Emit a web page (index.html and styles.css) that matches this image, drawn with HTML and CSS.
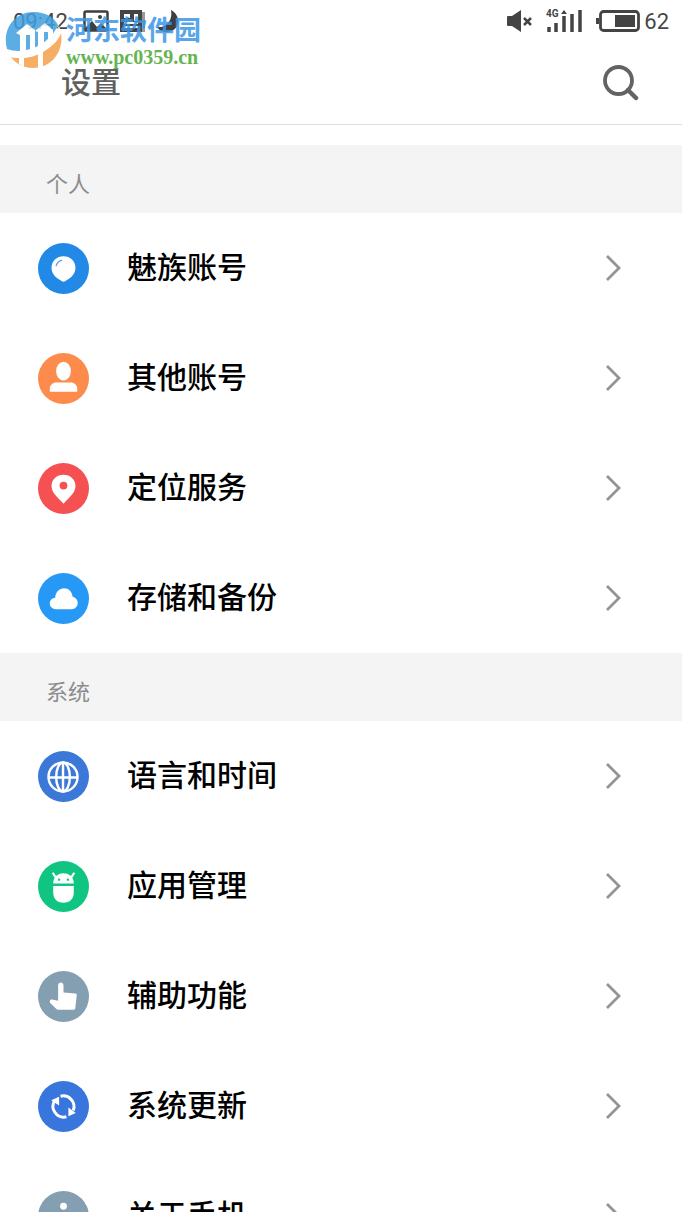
FILE: index.html
```html
<!DOCTYPE html>
<html lang="zh-CN">
<head>
  <meta charset="UTF-8">
  <meta name="viewport" content="width=device-width, initial-scale=1">
  <title>设置</title>
  <link rel="stylesheet" href="styles.css">
</head>
<body>

  <svg class="sprite" aria-hidden="true">
    <symbol id="seta" viewBox="0 0 18 28">
      <path d="M2 2l12 12L2 26" fill="none" stroke="#949494" stroke-width="2.8"/>
    </symbol>
  </svg>

  <div class="watermark">
    <svg class="watermark-logo" viewBox="0 0 58 58" aria-hidden="true">
      <path d="M3 38C-2 20 9 1 30 1c11 0 20 5 24 13C48 28 34 39 17 41 11 42 6 41 3 38z" fill="#3f9fdf"/>
      <path d="M57 22c3 18-9 35-28 35-9 0-17-4-22-11 12 3 25 0 35-7 8-5 13-11 15-17z" fill="#f5a04a"/>
      <path d="M12 22l11-9 8 6v20l-5 2V24h-4v17l-6 1V24zM31 20l10-8 8 7v11l-5 3V21h-4v17l-6 4V21z" fill="#fff"/>
      <path d="M15 45h5v11l-5-3zM34 40h5v18h-5z" fill="#fff"/>
      <path d="M3 38C20 44 42 36 55 15q2 4 2 7C47 42 24 50 7 46z" fill="#fff"/>
    </svg>
    <div class="watermark-text">
      <span class="watermark-name">河东软件园</span>
      <span class="watermark-url">www.pc0359.cn</span>
    </div>
  </div>

  <div class="phone">
    <div class="status-bar">
      <div class="status-left">
        <span class="status-time">09:42</span>
        <svg width="26" height="22" viewBox="0 0 26 22" aria-hidden="true">
          <rect x="1.5" y="1.5" width="23" height="19" rx="1.5" fill="none" stroke="#3e3e3e" stroke-width="2.5"/>
          <circle cx="17" cy="7" r="2" fill="#3e3e3e"/>
          <path d="M2 18l7-7 5 6 4-4 6 6v2H2z" fill="#3e3e3e"/>
        </svg>
        <svg width="26" height="22" viewBox="0 0 26 22" aria-hidden="true">
          <path d="M22 2h3v20h-3z" fill="#999"/>
          <path d="M0 0h22v22H0z" fill="#444"/>
          <path d="M4 4h6v4H4zM14 4h4v7h-4zM4 12h14v2H4zM4 16h14v2H4z" fill="#fff"/>
        </svg>
        <svg width="22" height="22" viewBox="0 0 22 22" aria-hidden="true">
          <path d="M14 0c11 6 9 21-4 22C5 22 2 20 0 17c9 1 16-6 14-17z" fill="#3e3e3e"/>
        </svg>
      </div>
      <div class="status-right">
        <svg width="26" height="24" viewBox="0 0 26 24" aria-hidden="true">
          <path d="M1 8q0-1 1-1h4l9-6v22l-9-6H2q-1 0-1-1z" fill="#444"/>
          <path d="M18 9l7 7M25 9l-7 7" stroke="#444" stroke-width="2.5"/>
        </svg>
        <svg class="signal" width="36" height="24" viewBox="0 0 36 24" aria-hidden="true">
          <path d="M3 18v5M10 14v9M18 7v16M26 5v18M34 1v22" stroke="#444" stroke-width="3.5"/>
          <path d="M15 5l3-4 3 4z" fill="#444"/>
          <text class="signal-text" x="0" y="8">4G</text>
        </svg>
        <svg class="battery" width="44" height="22" viewBox="0 0 44 22" aria-hidden="true">
          <rect x="4.5" y="1.5" width="38" height="19" rx="3" fill="none" stroke="#444" stroke-width="2.8"/>
          <path d="M0 8h3v6H0zM19 5h20v12H19z" fill="#444"/>
        </svg>
        <span>62</span>
      </div>
    </div>

    <header class="title-bar">
      <h1>设置</h1>
      <button class="btn-search" type="button" aria-label="搜索">
        <svg width="36" height="36" viewBox="0 0 36 36" aria-hidden="true">
          <circle cx="15.500" cy="15.500" r="13.500" fill="none" stroke="#636363" stroke-width="3.800"/>
          <path d="M25 25l8 8" stroke="#636363" stroke-width="4.500" stroke-linecap="round"/>
        </svg>
      </button>
    </header>

    <main class="settings">
      <section>
        <h2>个人</h2>
        <a class="item" href="#">
          <svg class="item-icon" viewBox="0 0 52 52" aria-hidden="true">
            <circle cx="26" cy="26" r="26" fill="#228ae6"/>
            <path d="M26 13.500c7 0 12.200 5 12.200 11.700 0 6-4 9.800-8.200 12.300-2 1.200-3 2-4 2s-2-.8-4-2c-4.200-2.500-8.200-6.300-8.200-12.300 0-6.700 5.200-11.700 12.200-11.700z" fill="#fff"/>
            <path d="M18.500 23.500q1-4.500 6-6" fill="none" stroke="#5aa5ea" stroke-width="1.500"/>
          </svg>
          <span class="item-label">魅族账号</span>
          <svg class="item-arrow" aria-hidden="true"><use href="#seta"/></svg>
        </a>
        <a class="item" href="#">
          <svg class="item-icon" viewBox="0 0 52 52" aria-hidden="true">
            <circle cx="26" cy="26" r="26" fill="#fc8b4c"/>
            <ellipse cx="26" cy="18.500" rx="7.500" ry="9.500" fill="#fff"/>
            <path d="M12 39.500v-3c0-4 3-6.500 7-6.500h14c4 0 7 2.500 7 6.500v3z" fill="#fff"/>
          </svg>
          <span class="item-label">其他账号</span>
          <svg class="item-arrow" aria-hidden="true"><use href="#seta"/></svg>
        </a>
        <a class="item" href="#">
          <svg class="item-icon" viewBox="0 0 52 52" aria-hidden="true">
            <circle cx="26" cy="26" r="26" fill="#f55153"/>
            <path d="M26 41.500C19 34 13.800 30 13.800 23.500c0-6.600 5.400-11.500 12.200-11.500s12.200 4.900 12.200 11.500C38.200 30 33 34 26 41.500z" fill="#fff"/>
            <circle cx="26" cy="23" r="4" fill="#f55153"/>
          </svg>
          <span class="item-label">定位服务</span>
          <svg class="item-arrow" aria-hidden="true"><use href="#seta"/></svg>
        </a>
        <a class="item" href="#">
          <svg class="item-icon" viewBox="0 0 52 52" aria-hidden="true">
            <circle cx="26" cy="26" r="26" fill="#2699f6"/>
            <path d="M18 37a6 6 0 0 1-6-6c0-3.500 2.500-5.500 5.500-5.800C18 19 22 15.500 26.500 15.500c4.600 0 8.300 3.500 8.800 8.800 3 .7 5.200 3.200 5.200 6.400 0 3.500-2.700 6.300-6.200 6.300z" fill="#fff"/>
          </svg>
          <span class="item-label">存储和备份</span>
          <svg class="item-arrow" aria-hidden="true"><use href="#seta"/></svg>
        </a>
      </section>

      <section>
        <h2>系统</h2>
        <a class="item" href="#">
          <svg class="item-icon" viewBox="0 0 52 52" aria-hidden="true">
            <circle cx="26" cy="26" r="26" fill="#3b78d8"/>
            <g fill="none" stroke="#fff" stroke-width="2.500">
              <circle cx="25.500" cy="26.500" r="14.800"/>
              <ellipse cx="25.500" cy="26.500" rx="7" ry="14.800"/>
              <path d="M11 27h29M25.500 12v29"/>
            </g>
          </svg>
          <span class="item-label">语言和时间</span>
          <svg class="item-arrow" aria-hidden="true"><use href="#seta"/></svg>
        </a>
        <a class="item" href="#">
          <svg class="item-icon" viewBox="0 0 52 52" aria-hidden="true">
            <circle cx="26" cy="26" r="26" fill="#0fc581"/>
            <path d="M15.500 23c0-4 1.500-6.500 3.500-8.300q3-2.200 7-2.200t7 2.200c2 1.800 3.500 4.300 3.500 8.300zM15.500 25.500h21v6.500c0 6.500-4 10.500-10.500 10.500s-10.500-4-10.500-10.500z" fill="#fff"/>
            <path d="M15 12l3.500 5.500M37 12l-3.500 5.500" stroke="#fff" stroke-width="2.200"/>
            <circle cx="21.500" cy="19" r="1.200" fill="#0fc581"/>
            <circle cx="30.500" cy="19" r="1.200" fill="#0fc581"/>
          </svg>
          <span class="item-label">应用管理</span>
          <svg class="item-arrow" aria-hidden="true"><use href="#seta"/></svg>
        </a>
        <a class="item" href="#">
          <svg class="item-icon" viewBox="0 0 52 52" aria-hidden="true">
            <circle cx="26" cy="26" r="26" fill="#849eb2"/>
            <path d="M20.500 15c0-4.500 5.500-4.500 5.500 0v7l12 1q1.500 0 1.500 1.500L38 38q0 1.500-1.500 1.500H21q-1.500 0-2.500-1L12.500 32.500c-1.500-2 .5-4 3-3.200l5 1z" fill="#fff"/>
          </svg>
          <span class="item-label">辅助功能</span>
          <svg class="item-arrow" aria-hidden="true"><use href="#seta"/></svg>
        </a>
        <a class="item" href="#">
          <svg class="item-icon" viewBox="0 0 52 52" aria-hidden="true">
            <circle cx="26" cy="26" r="26" fill="#3876de"/>
            <g fill="none" stroke="#fff" stroke-width="3">
              <path d="M23 15.500A11 11 0 0 1 36 30"/>
              <path d="M29 36.500A11 11 0 0 1 17 20"/>
            </g>
            <path d="M13.500 19.500l8-3.500v9zM38.500 32.500l-7.500 3.500v-9z" fill="#fff"/>
          </svg>
          <span class="item-label">系统更新</span>
          <svg class="item-arrow" aria-hidden="true"><use href="#seta"/></svg>
        </a>
        <a class="item" href="#">
          <svg class="item-icon" viewBox="0 0 52 52" aria-hidden="true">
            <circle cx="26" cy="26" r="26" fill="#849eb2"/>
            <circle cx="26" cy="15.500" r="3.500" fill="#fff"/>
            <path d="M23 23h6v17h-6z" fill="#fff"/>
          </svg>
          <span class="item-label">关于手机</span>
          <svg class="item-arrow" aria-hidden="true"><use href="#seta"/></svg>
        </a>
      </section>
    </main>
  </div>

</body>
</html>
```
FILE: styles.css
```css
* {
  box-sizing: border-box;
}
body {
  margin: 0;
  background: #fff;
  color: #000;
  font-family: Roboto, "Noto Sans CJK SC", sans-serif;
}
h1, h2 {
  margin: 0;
}
svg {
  display: block;
  flex-shrink: 0;
}
.sprite {
  position: absolute;
  width: 0;
  height: 0;
}
.phone {
  display: flex;
  flex-direction: column;
  height: 100vh;
}
.status-bar {
  display: flex;
  justify-content: space-between;
  align-items: center;
  flex-shrink: 0;
  height: 42px;
  padding: 0 13px;
  color: #484848;
  font-size: 22px;
}
.status-left, .status-right {
  display: flex;
  align-items: center;
}
.status-left {
  gap: 11px;
}
.status-time {
  margin-right: 4px;
}
.signal {
  margin-left: 14px;
}
.signal-text {
  font-size: 10px;
  font-weight: bold;
  fill: #444;
}
.battery {
  margin: 0 4px 0 14px;
}
.title-bar {
  display: flex;
  justify-content: space-between;
  align-items: center;
  flex-shrink: 0;
  height: 83px;
  padding: 0 43px 0 61px;
  border-bottom: 1px solid #dedede;
}
.title-bar h1 {
  color: #606060;
  font-size: 30px;
  font-weight: 500;
  line-height: 40px;
}
.btn-search {
  padding: 0;
  border: none;
  background: transparent;
  cursor: pointer;
}
.settings {
  flex: 1;
  min-height: 0;
  padding-top: 20px;
  overflow-y: auto;
  scrollbar-width: none;
}
.settings h2 {
  padding: 12px 46px 0;
  background: #f4f4f4;
  color: #8c8c8c;
  font-size: 22px;
  font-weight: 400;
  line-height: 56px;
}
.item {
  display: flex;
  align-items: center;
  height: 110px;
  padding: 0 59px 0 38px;
  color: #000;
  text-decoration: none;
}
.item-icon {
  width: 51px;
  height: 51px;
}
.item-label {
  flex: 1;
  margin-left: 38px;
  font-size: 30px;
  font-weight: 500;
  line-height: 44px;
}
.item-arrow {
  width: 18px;
  height: 28px;
}
.watermark {
  position: absolute;
  top: 11px;
  left: 4px;
  display: flex;
  gap: 4px;
  opacity: 0.85;
  pointer-events: none;
}
.watermark-logo {
  width: 58px;
  height: 58px;
}
.watermark-text {
  display: flex;
  flex-direction: column;
  font-weight: bold;
}
.watermark-name {
  color: #3c96e6;
  font-family: "Noto Sans CJK SC", sans-serif;
  font-size: 27px;
  line-height: 36px;
}
.watermark-url {
  color: #4aa834;
  font-family: "Liberation Serif", serif;
  font-size: 20px;
  line-height: 20px;
}
```
